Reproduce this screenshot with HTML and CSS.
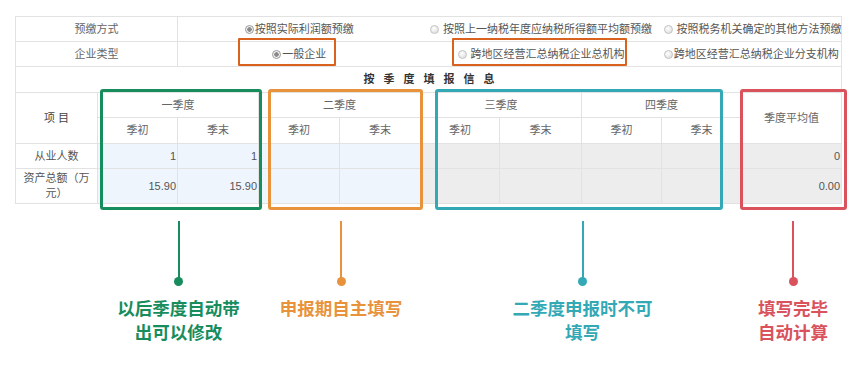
FILE: index.html
```html
<!DOCTYPE html>
<html lang="zh-CN">
<head>
  <meta charset="UTF-8" />
  <title>按季度填报信息</title>
  <link rel="stylesheet" href="styles.css">
</head>
<body>

<div class="sheet">
  <table class="report">
    <colgroup>
      <col style="width:82px"><col style="width:80px"><col style="width:81px"><col style="width:81px"><col style="width:81px">
      <col style="width:79px"><col style="width:82px"><col style="width:80px"><col style="width:80px"><col style="width:100px">
    </colgroup>
    <tr class="row-opt">
      <td colspan="2" class="label">预缴方式</td>
      <td colspan="3" class="opt"><span class="radio on"></span>按照实际利润额预缴</td>
      <td colspan="3" class="opt"><span class="radio"></span> 按照上一纳税年度应纳税所得额平均额预缴</td>
      <td colspan="2" class="opt"><span class="radio"></span> 按照税务机关确定的其他方法预缴</td>
    </tr>
    <tr class="row-opt">
      <td colspan="2" class="label">企业类型</td>
      <td colspan="3" class="opt"><span class="radio on"></span>一般企业</td>
      <td colspan="3" class="opt"><span class="radio"></span> 跨地区经营汇总纳税企业总机构</td>
      <td colspan="2" class="opt"><span class="radio"></span>跨地区经营汇总纳税企业分支机构</td>
    </tr>
    <tr class="row-title">
      <td colspan="10">按季度填报信息</td>
    </tr>
    <tr class="row-h1">
      <td rowspan="2" class="item-head">项 目</td>
      <td colspan="2">一季度</td>
      <td colspan="2">二季度</td>
      <td colspan="2">三季度</td>
      <td colspan="2">四季度</td>
      <td rowspan="2">季度平均值</td>
    </tr>
    <tr class="row-h2">
      <td>季初</td><td>季末</td>
      <td>季初</td><td>季末</td>
      <td>季初</td><td>季末</td>
      <td>季初</td><td>季末</td>
    </tr>
    <tr class="row-d1">
      <td class="name">从业人数</td>
      <td class="num edit">1</td><td class="num edit">1</td>
      <td class="num edit"></td><td class="num edit"></td>
      <td class="num lock"></td><td class="num lock"></td>
      <td class="num lock"></td><td class="num lock"></td>
      <td class="num lock avg">0</td>
    </tr>
    <tr class="row-d2">
      <td class="name">资产总额（万元）</td>
      <td class="num edit">15.90</td><td class="num edit">15.90</td>
      <td class="num edit"></td><td class="num edit"></td>
      <td class="num lock"></td><td class="num lock"></td>
      <td class="num lock"></td><td class="num lock"></td>
      <td class="num lock avg">0.00</td>
    </tr>
  </table>

  <!-- highlight frames over the table -->
  <div class="frame type-a"></div>
  <div class="frame type-b"></div>
  <div class="frame q1"></div>
  <div class="frame q2"></div>
  <div class="frame q34"></div>
  <div class="frame avg"></div>

  <div class="notes">
    <div class="spacer"></div>
    <div class="note green">
      <span class="stem"></span><span class="dot"></span>
      <p>以后季度自动带<br>出可以修改</p>
    </div>
    <div class="note orange">
      <span class="stem"></span><span class="dot"></span>
      <p>申报期自主填写</p>
    </div>
    <div class="note teal">
      <span class="stem"></span><span class="dot"></span>
      <p>二季度申报时不可<br>填写</p>
    </div>
    <div class="note red">
      <span class="stem"></span><span class="dot"></span>
      <p>填写完毕<br>自动计算</p>
    </div>
  </div>
</div>

</body>
</html>
```

FILE: styles.css
```css
:root {
  --line: #e2e2e2;
  --green: #178c5c;
  --orange: #e8933c;
  --teal: #33a9b6;
  --red: #d9525c;
  --box: #d9621f;
}

body {
  margin: 0;
  background: #fff;
  font-family: "Liberation Sans", "Noto Sans CJK SC", sans-serif;
  color: #555;
}

.sheet {
  position: relative;
  padding: 16px 0 0 15px;
  width: 827px;
}

.report {
  width: 826px;
  table-layout: fixed;
  border-collapse: collapse;
  font-size: 11px;
  border-left: 1px solid var(--line);
  border-right: 1px solid var(--line);
}

.report td {
  border: 1px solid var(--line);
  text-align: center;
  padding: 0 2px;
  line-height: 15px;
}

.row-opt { height: 25px; }
.row-opt td.opt {
  border-left: none;
  border-right: none;
  white-space: nowrap;
}
.row-opt .label { color: #666; }

.radio {
  display: inline-block;
  width: 9px;
  height: 9px;
  border-radius: 50%;
  border: 1px solid #c4c4c4;
  background: radial-gradient(circle at 40% 35%, #fff 0, #e4e4e4 70%);
  vertical-align: -1px;
  box-sizing: border-box;
  margin-right: 1px;
}
.radio.on {
  border-color: #9a9a9a;
  background: radial-gradient(circle, #8a8a8a 0 2px, #f2f2f2 2.5px);
}

.row-title { height: 26px; }
.row-title td {
  font-weight: bold;
  color: #333;
  letter-spacing: 9px;
  padding-left: 12px;
}

.row-h1 { height: 25px; }
.row-h2 { height: 26px; }
.row-h1 td, .row-h2 td { color: #666; }
.item-head { color: #444 !important; }

.row-d1 { height: 25px; }
.row-d2 { height: 35px; }

.report td.name {
  color: #555;
  padding: 0 6px;
}

.report td.num {
  text-align: right;
  padding-right: 1px;
  color: #555;
}
.num.edit { background: #eef5fd; }
.num.lock { background: #ededed; }
.num.avg { color: #a0a0a0; }

.frame {
  position: absolute;
  box-sizing: border-box;
  border: 3px solid;
  border-radius: 3px;
}
.frame.type-a { left: 238px; top: 38px; width: 98px; height: 28px; border: 2px solid var(--box); border-radius: 1px; }
.frame.type-b { left: 452px; top: 38px; width: 175px; height: 28px; border: 2px solid var(--box); border-radius: 1px; }
.frame.q1 { left: 100px; top: 89px; width: 162px; height: 121px; border-color: var(--green); }
.frame.q2 { left: 268px; top: 89px; width: 155px; height: 121px; border-color: var(--orange); }
.frame.q34 { left: 435px; top: 89px; width: 288px; height: 121px; border-color: var(--teal); }
.frame.avg { left: 740px; top: 89px; width: 107px; height: 121px; border-color: var(--red); }

.notes {
  display: grid;
  grid-template-columns: 82px 163px 162px 321px 100px;
  padding-top: 17px;
}

.note {
  display: flex;
  flex-direction: column;
  align-items: center;
}

.note .stem {
  width: 2px;
  height: 58px;
  background: currentColor;
}

.note .dot {
  width: 9px;
  height: 9px;
  border-radius: 50%;
  background: currentColor;
  margin-top: -2px;
}

.note p {
  margin: 10px 0 0;
  font-family: "Noto Sans CJK SC", sans-serif;
  font-weight: bold;
  font-size: 17.5px;
  line-height: 24px;
  text-align: center;
  white-space: nowrap;
}

.note.green { color: var(--green); }
.note.orange { color: var(--orange); }
.note.teal { color: var(--teal); }
.note.red { color: var(--red); }
```
